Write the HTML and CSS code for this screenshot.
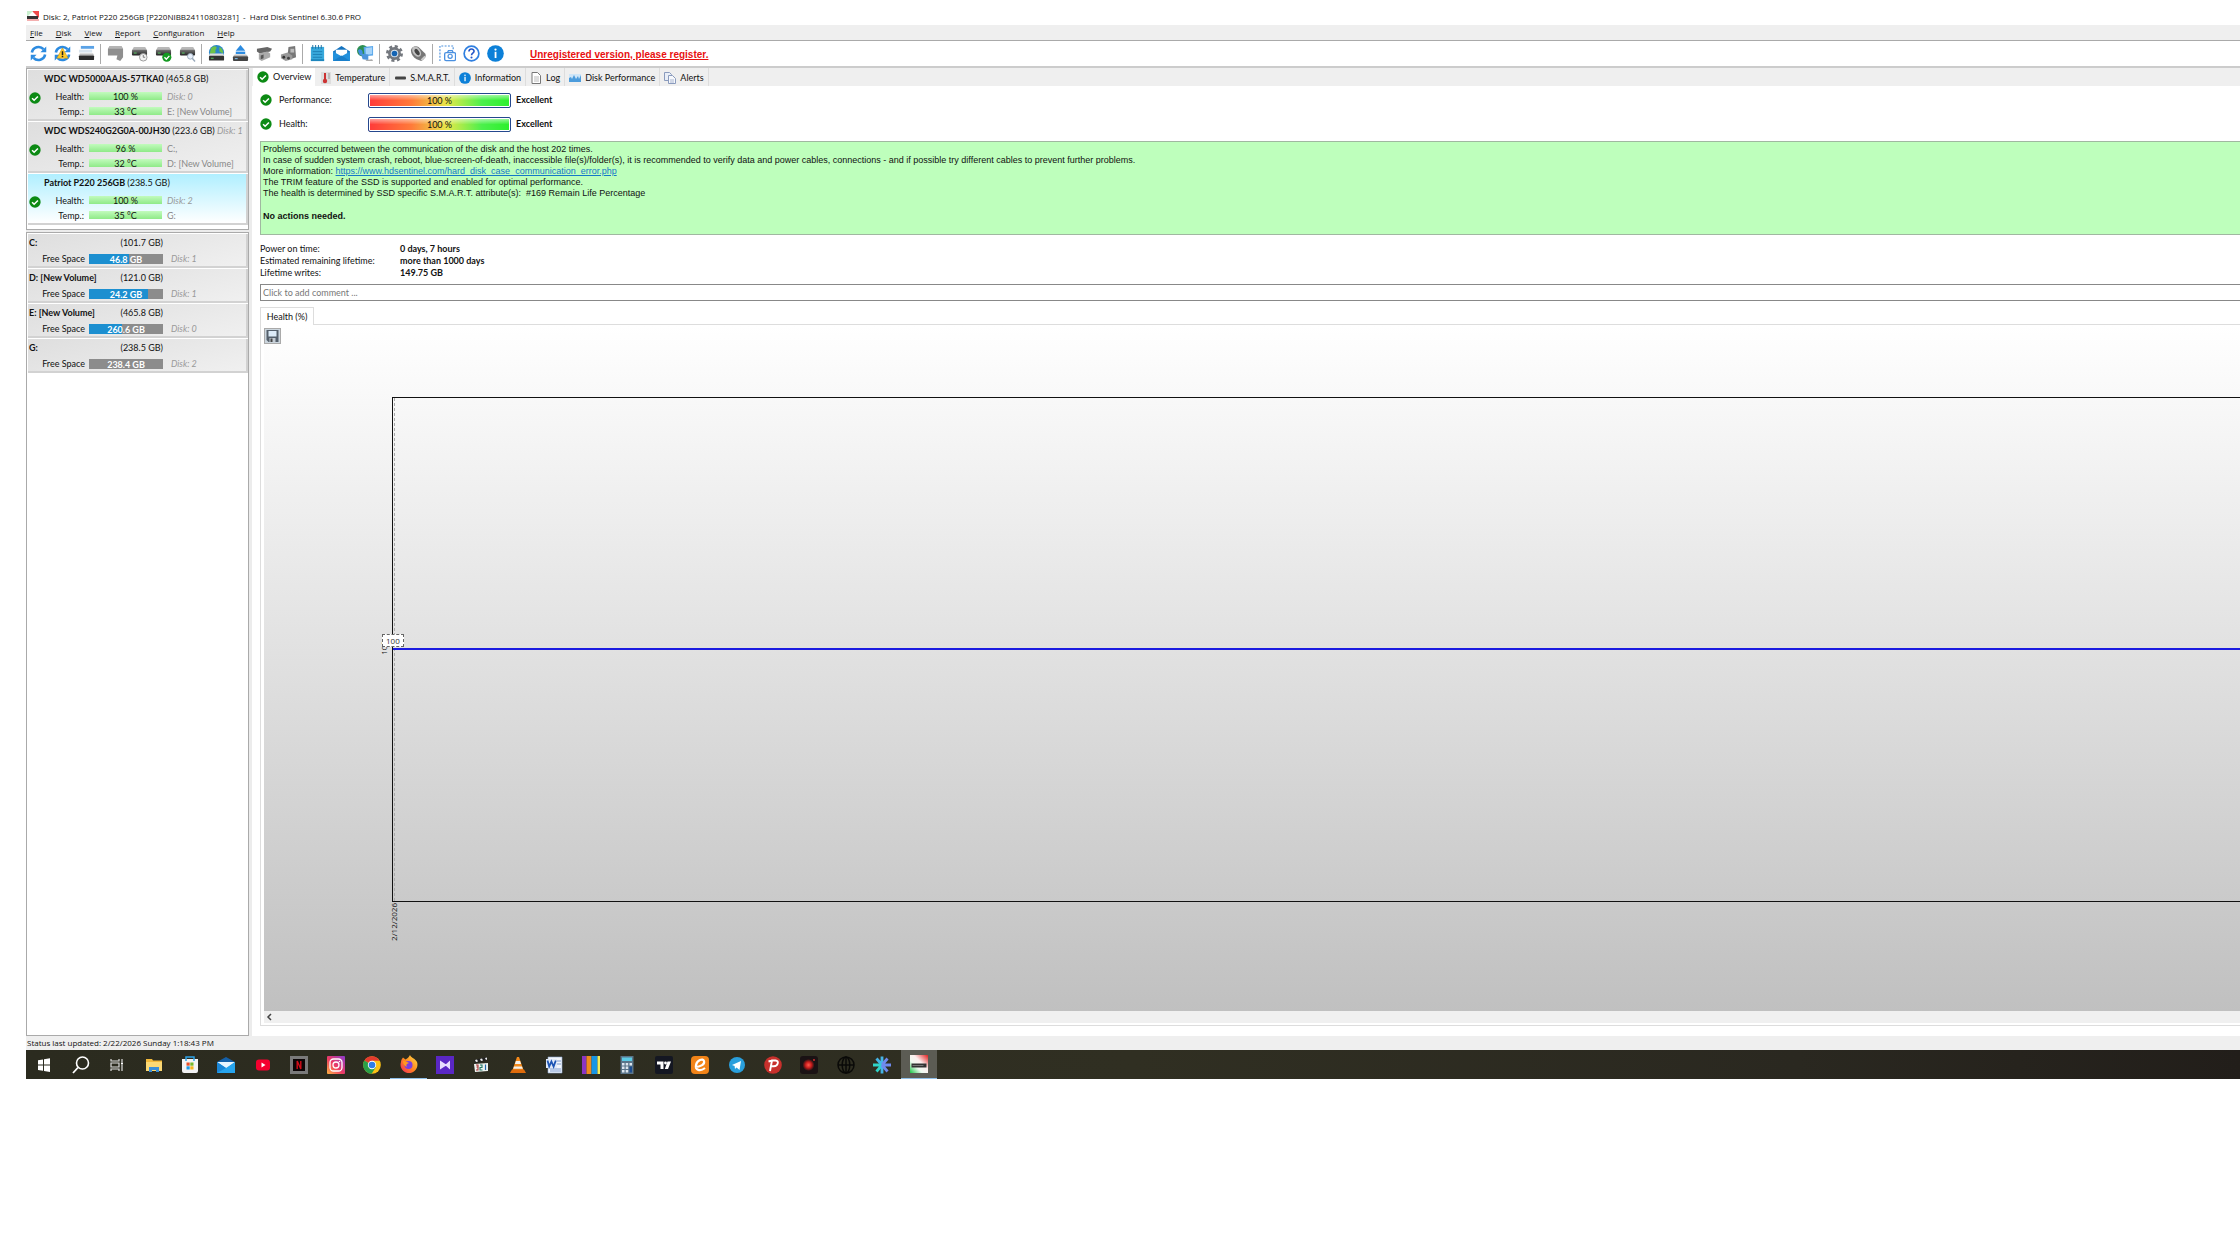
FILE: index.html
```
<!DOCTYPE html>
<html lang="en">
<head>
<meta charset="UTF-8" />
<meta name="viewport" content="width=device-width, initial-scale=1" />
<title>Hard Disk Sentinel</title>
<link rel="stylesheet" href="styles.css">
</head>
<body>

<!-- shared icons -->
<svg class="defs" width="0" height="0" aria-hidden="true">
  <linearGradient id="gradDrive" x1="0" y1="0" x2="0" y2="1"><stop offset="0" stop-color="#777"/><stop offset="1" stop-color="#222"/></linearGradient>
  <linearGradient id="gradInsta" x1="0" y1="1" x2="1" y2="0"><stop offset="0" stop-color="#fdb642"/><stop offset=".45" stop-color="#ee3b62"/><stop offset="1" stop-color="#8a3bd0"/></linearGradient>
  <linearGradient id="gradFox" x1="1" y1="0" x2="0" y2="1"><stop offset="0" stop-color="#ffe14a"/><stop offset=".5" stop-color="#ff8a1f"/><stop offset="1" stop-color="#f5245b"/></linearGradient>
  <radialGradient id="gradRed"><stop offset="0" stop-color="#ff5a4e"/><stop offset=".5" stop-color="#c81c1c"/><stop offset="1" stop-color="#1a1214"/></radialGradient>
  <linearGradient id="gradLogo" x1="0" y1="1" x2="1" y2="0"><stop offset="0" stop-color="#18c544"/><stop offset=".35" stop-color="#eefaf0"/><stop offset=".6" stop-color="#fdeeee"/><stop offset="1" stop-color="#e01f1f"/></linearGradient>
  <symbol id="ok" viewBox="0 0 14 14">
    <circle cx="7" cy="7" r="6.6" fill="#0c8a14"/>
    <path d="M3.6 7.2l2.4 2.4 4.4-4.4" fill="none" stroke="#fff" stroke-width="1.8"/>
  </symbol>
  <symbol id="info" viewBox="0 0 18 18">
    <circle cx="9" cy="9" r="8.8" fill="#0c80d8"/>
    <circle cx="9" cy="4.8" r="1.2" fill="#fff"/>
    <rect x="8.1" y="7.2" width="1.9" height="6.6" fill="#fff"/>
  </symbol>
  <symbol id="drive" viewBox="0 0 18 18">
    <path d="M3 2h12l2 3.5H1z" fill="#b9b9b9"/>
    <rect x="1" y="5" width="16" height="6" rx="1" fill="url(#gradDrive)"/>
    <rect x="3" y="8" width="3" height="1" fill="#5fd06a"/>
  </symbol>
  <symbol id="sync" viewBox="0 0 18 18">
    <path d="M2 8a7.2 7.2 0 0 1 12.3-3.6M16 10a7.2 7.2 0 0 1-12.3 3.6" fill="none" stroke="#2c8be0" stroke-width="2.8"/>
    <path d="M17.2 1.5v6.2h-6.2zM.8 16.5v-6.2h6.2z" fill="#2c8be0"/>
  </symbol>
  <symbol id="logo" viewBox="0 0 18 18">
    <rect width="18" height="18" fill="url(#gradLogo)"/>
    <rect x="1.5" y="8.5" width="15" height="4" fill="#333"/>
    <rect x="2.5" y="10" width="11" height="1" fill="#777"/>
  </symbol>
</svg>

<div class="app">
  <header class="titlebar">
    <svg class="icon-12" viewBox="0 0 12 12"><rect width="12" height="12" fill="#fff"/><path d="M5 0h7v7z" fill="#ef4b4b"/><path d="M0 0h6L0 6z" fill="#c9f0cf"/><rect y="5" width="11" height="3" fill="#333"/><path d="M0 8h12v2H0z" fill="#f4b0b0"/></svg>
    <span>Disk: 2, Patriot P220 256GB [P220NIBB24110803281] &nbsp;-&nbsp; Hard Disk Sentinel 6.30.6 PRO</span>
  </header>

  <nav class="menubar">
    <button><u>F</u>ile</button>
    <button><u>D</u>isk</button>
    <button><u>V</u>iew</button>
    <button><u>R</u>eport</button>
    <button><u>C</u>onfiguration</button>
    <button><u>H</u>elp</button>
  </nav>

  <div class="toolbar">
    <button aria-label="Refresh"><svg viewBox="0 0 18 18"><use href="#sync"/></svg></button>
    <button aria-label="Refresh alerts"><svg viewBox="0 0 18 18"><use href="#sync"/><path d="M9 3l6 11H3z" fill="#ffc928" stroke="#b98a10" stroke-width=".5"/><path d="M9 6.5v4M9 11.5v1.5" stroke="#222" stroke-width="1.6"/></svg></button>
    <button aria-label="Disk list"><svg viewBox="0 0 18 18"><rect x="3" y="1" width="14" height="3" fill="#5aa2e6"/><rect x="1" y="5" width="14" height="3" fill="#d9e4ee"/><path d="M2 9h14l1 2H1z" fill="#bbb"/><rect x="1" y="11" width="16" height="5" rx="1" fill="#2b2b2b"/></svg></button>
    <span class="sep"></span>
    <button aria-label="Surface test"><svg viewBox="0 0 18 18"><path d="M3 1h12l2 3v9l-3 4-4-2 1-4H1V4z" fill="#8f8f8f"/><path d="M3 1h12l2 3H1z" fill="#b4b4b4"/></svg></button>
    <button aria-label="Short self test"><svg viewBox="0 0 18 18"><use href="#drive"/><circle cx="13" cy="13" r="4" fill="#f3f3f3" stroke="#999"/><path d="M13 10.5V13h2" fill="none" stroke="#777"/></svg></button>
    <button aria-label="Extended self test"><svg viewBox="0 0 18 18"><use href="#drive"/><circle cx="12.5" cy="13" r="4.8" fill="#159a22"/><path d="M10 13l2 2 3.2-3.5" fill="none" stroke="#fff" stroke-width="1.5"/></svg></button>
    <button aria-label="Disk analysis"><svg viewBox="0 0 18 18"><use href="#drive"/><circle cx="12" cy="12" r="3" fill="#e6eefa" stroke="#9ab"/><path d="M14 14l3 3.5" stroke="#9ab" stroke-width="1.5"/></svg></button>
    <span class="sep"></span>
    <button aria-label="Online"><svg viewBox="0 0 18 18"><circle cx="9" cy="8" r="8" fill="#2a86c8"/><path d="M3 4c2-3 5-3 6-2s-2 3-1 5-4 3-6 2zM12 2c3 1 4 4 4 7l-4-2z" fill="#6cc24a"/><path d="M2 9h14l1 3H1z" fill="#ddd"/><rect x="1" y="11.5" width="16" height="5" rx="1" fill="#333"/><rect x="3" y="13.5" width="3" height="1" fill="#5fd06a"/></svg></button>
    <button aria-label="Eject"><svg viewBox="0 0 18 18"><path d="M9 0l5 6H4z" fill="#2c8be0"/><rect x="4" y="7" width="10" height="2.5" fill="#2c8be0"/><path d="M3 10h12l2 2H1z" fill="#bbb"/><rect x="1" y="12" width="16" height="5" rx="1" fill="#444"/><rect x="3" y="14" width="3" height="1" fill="#8cf"/></svg></button>
    <button aria-label="Connector"><svg viewBox="0 0 18 18"><path d="M1 4l11-2 5 2-2 3-11 2-3-2z" fill="#666"/><path d="M3 9l9-2 3 2v4l-9 4-3-2z" fill="#aaa"/><path d="M5 11l3-1v4l-3 1z" fill="#555"/></svg></button>
    <button aria-label="Power connector"><svg viewBox="0 0 18 18"><path d="M9 2l7-1 1 12-6 2-3-4z" fill="#777"/><path d="M11 4h4v4h-4z" fill="#bbb"/><path d="M1 10l7-2 5 3v4l-7 2-5-3z" fill="#999"/><circle cx="4" cy="13" r="1.5" fill="#333"/><circle cx="9" cy="14" r="1.5" fill="#444"/></svg></button>
    <span class="sep"></span>
    <button aria-label="Report"><svg viewBox="0 0 18 18"><rect x="2" y="2" width="14" height="15" fill="#38a9dc"/><path d="M4 0v4M7 0v4M10 0v4M13 0v4" stroke="#1c6fa0"/><path d="M4 7h10M4 10h10M4 13h10" stroke="#1d7fb4"/><rect x="2" y="15" width="14" height="2" fill="#1d86bd"/></svg></button>
    <button aria-label="Send mail"><svg viewBox="0 0 18 18"><path d="M0 7l9-6 9 6v10H0z" fill="#1473bf"/><path d="M3 5h12v7H3z" fill="#fff"/><path d="M0 7l9 5 9-5v10H0z" fill="#2391dc"/><path d="M0 17l9-6 9 6z" fill="#1a7fca"/></svg></button>
    <button aria-label="Network"><svg viewBox="0 0 18 18"><circle cx="6" cy="6" r="6" fill="#2d8f52"/><path d="M1 6c2-3 5-1 5 2s-2 3-3 3z" fill="#3f8ee0"/><path d="M7 2l10-1v10l-9 1z" fill="#5aa7ea"/><path d="M9 3.5l7-1v7l-6.500 1z" fill="#a6d4fa"/><path d="M4 9l8 1v6l-6-1z" fill="#4d95db"/><path d="M10 16l6-1 1 2h-8z" fill="#aaa"/></svg></button>
    <span class="sep"></span>
    <button aria-label="Settings"><svg viewBox="0 0 18 18"><circle cx="9" cy="9" r="7.5" fill="none" stroke="#74787e" stroke-width="3" stroke-dasharray="3.2 2.69"/><circle cx="9" cy="9" r="6.8" fill="#74787e"/><circle cx="9" cy="9" r="4" fill="#dde6ee"/><circle cx="9" cy="9" r="3" fill="#1464b4"/></svg></button>
    <button aria-label="Sound"><svg viewBox="0 0 18 18"><path d="M1 6C1 2 6 0 9 2l7 7c2 3-1 6-4 8l-5-2C3 13 1 9 1 6z" fill="#777"/><ellipse cx="7" cy="7" rx="4" ry="6" transform="rotate(-35 7 7)" fill="#c2c2c2"/><ellipse cx="7.5" cy="7.5" rx="2" ry="3.8" transform="rotate(-35 7.5 7.5)" fill="#444"/><path d="M12 16l4-4" stroke="#ccc" stroke-width="2"/></svg></button>
    <span class="sep"></span>
    <button aria-label="Screenshot"><svg viewBox="0 0 18 18"><path d="M1 17V1h14v4" fill="none" stroke="#4a8fdc" stroke-width="1.2" stroke-dasharray="2 1.5"/><rect x="6" y="8" width="11.5" height="8.5" rx="1.5" fill="#fff" stroke="#4a90e0" stroke-width="1.4"/><path d="M9 8l1-2h4l1 2" fill="none" stroke="#4a90e0" stroke-width="1.4"/><circle cx="11.8" cy="12" r="2.2" fill="none" stroke="#4a90e0" stroke-width="1.3"/></svg></button>
    <button aria-label="Help"><svg viewBox="0 0 18 18"><circle cx="9" cy="9" r="7.8" fill="#fff" stroke="#2f7fe0" stroke-width="1.8"/><path d="M6.3 7c0-3.6 5.4-3.6 5.4-.4 0 2-2.7 2-2.7 4.2" fill="none" stroke="#2456c8" stroke-width="1.7"/><circle cx="9" cy="13.3" r="1.1" fill="#2456c8"/></svg></button>
    <button aria-label="About"><svg viewBox="0 0 18 18"><use href="#info"/></svg></button>
    <a class="register" href="#">Unregistered version, please register.</a>
  </div>

  <div class="workspace">
    <aside class="sidebar">
      <ul class="panel disks">
        <li class="disk">
          <h4>WDC WD5000AAJS-57TKA0 <span>(465.8 GB)</span></h4>
          <svg class="icon-12 state"><use href="#ok"/></svg>
          <div class="reading"><span class="label">Health:</span><span class="meter">100 %</span><em>Disk: 0</em></div>
          <div class="reading"><span class="label">Temp.:</span><span class="meter">33 °C</span><span class="vol">E: [New Volume]</span></div>
        </li>
        <li class="disk">
          <h4>WDC WDS240G2G0A-00JH30 <span>(223.6 GB)</span> <em>Disk: 1</em></h4>
          <svg class="icon-12 state"><use href="#ok"/></svg>
          <div class="reading"><span class="label">Health:</span><span class="meter">96 %</span><span class="vol">C:,</span></div>
          <div class="reading"><span class="label">Temp.:</span><span class="meter">32 °C</span><span class="vol">D: [New Volume]</span></div>
        </li>
        <li class="disk selected">
          <h4>Patriot P220 256GB <span>(238.5 GB)</span></h4>
          <svg class="icon-12 state"><use href="#ok"/></svg>
          <div class="reading"><span class="label">Health:</span><span class="meter">100 %</span><em>Disk: 2</em></div>
          <div class="reading"><span class="label">Temp.:</span><span class="meter">35 °C</span><span class="vol">G:</span></div>
        </li>
      </ul>

      <ul class="panel volumes">
        <li class="volume">
          <div class="volume-name"><b>C:</b><span>(101.7 GB)</span></div>
          <div class="volume-space"><span class="label">Free Space</span><span class="space"><i style="width: 54%"></i><b>46.8 GB</b></span><em>Disk: 1</em></div>
        </li>
        <li class="volume">
          <div class="volume-name"><b>D: [New Volume]</b><span>(121.0 GB)</span></div>
          <div class="volume-space"><span class="label">Free Space</span><span class="space"><i style="width: 80%"></i><b>24.2 GB</b></span><em>Disk: 1</em></div>
        </li>
        <li class="volume">
          <div class="volume-name"><b>E: [New Volume]</b><span>(465.8 GB)</span></div>
          <div class="volume-space"><span class="label">Free Space</span><span class="space"><i style="width: 44%"></i><b>260.6 GB</b></span><em>Disk: 0</em></div>
        </li>
        <li class="volume">
          <div class="volume-name"><b>G:</b><span>(238.5 GB)</span></div>
          <div class="volume-space"><span class="label">Free Space</span><span class="space"><i style="width: 0%"></i><b>238.4 GB</b></span><em>Disk: 2</em></div>
        </li>
      </ul>
    </aside>

    <main class="main">
      <div class="tabs">
        <button class="tab active"><svg class="icon-12"><use href="#ok"/></svg>Overview</button>
        <button class="tab"><svg class="icon-12" viewBox="0 0 12 12"><rect x="2" width="10" height="12" fill="#ddd"/><path d="M6 1v7" stroke="#c33" stroke-width="2"/><circle cx="6" cy="9" r="2.2" fill="#c33"/><path d="M9 2h2M9 4h2M9 6h2" stroke="#999"/></svg>Temperature</button>
        <button class="tab"><svg class="icon-12" viewBox="0 0 12 12"><rect x="1" y="4.5" width="11" height="3" rx="1" fill="#444"/></svg>S.M.A.R.T.</button>
        <button class="tab"><svg class="icon-12"><use href="#info"/></svg>Information</button>
        <button class="tab"><svg class="icon-12" viewBox="0 0 12 12"><path d="M2 .5h5.5L10.5 3.5v8H2z" fill="#fff" stroke="#777"/><path d="M4 5h5M4 7h5M4 9h5" stroke="#aaa" stroke-width=".8"/></svg>Log</button>
        <button class="tab"><svg class="icon-12" viewBox="0 0 12 12"><rect y="2" width="12" height="8" fill="#cfe6f8"/><path d="M0 10V6l2-1 1 2 2-4 2 4 2-3 1 3 2-4v7z" fill="#4c9cdc"/></svg>Disk Performance</button>
        <button class="tab"><svg class="icon-12" viewBox="0 0 12 12"><path d="M.5.5h5l2 2v6h-7z" fill="#e9eef7" stroke="#8a9bbd"/><path d="M4.5 3.5h4l3 3v5h-7z" fill="#f6f8fc" stroke="#8a9bbd"/><path d="M6 8h4M6 10h4" stroke="#8a9bbd" stroke-width=".7"/></svg>Alerts</button>
      </div>

      <div class="overview">
        <div class="rating"><svg class="icon-12"><use href="#ok"/></svg><span class="rating-name">Performance:</span><span class="rating-bar">100 %</span><b>Excellent</b></div>
        <div class="rating"><svg class="icon-12"><use href="#ok"/></svg><span class="rating-name">Health:</span><span class="rating-bar">100 %</span><b>Excellent</b></div>

        <div class="message">
          <p>Problems occurred between the communication of the disk and the host 202 times.</p>
          <p>In case of sudden system crash, reboot, blue-screen-of-death, inaccessible file(s)/folder(s), it is recommended to verify data and power cables, connections - and if possible try different cables to prevent further problems.</p>
          <p>More information: <a href="#">https://www.hdsentinel.com/hard_disk_case_communication_error.php</a></p>
          <p>The TRIM feature of the SSD is supported and enabled for optimal performance.</p>
          <p>The health is determined by SSD specific S.M.A.R.T. attribute(s): &nbsp;#169 Remain Life Percentage</p>
          <p class="action">No actions needed.</p>
        </div>

        <dl class="stats">
          <dt>Power on time:</dt><dd>0 days, 7 hours</dd>
          <dt>Estimated remaining lifetime:</dt><dd>more than 1000 days</dd>
          <dt>Lifetime writes:</dt><dd>149.75 GB</dd>
        </dl>

        <input class="comment" type="text" aria-label="Comment" placeholder="Click to add comment ...">

        <button class="chart-tab">Health (%)</button>
        <div class="chart-panel">
          <div class="chart">
            <button class="save" aria-label="Save chart"><svg viewBox="0 0 12 12"><path d="M0 0h12v12H2L0 10z" fill="#55606c"/><rect x="2" y="1" width="8" height="5.5" fill="#dcebf8"/><rect x="3" y="8" width="6" height="4" fill="#c4ccd4"/><rect x="4" y="8.5" width="2" height="3.5" fill="#444"/></svg></button>
            <div class="plot">
              <div class="series"></div>
              <span class="axis-y">100</span>
              <span class="tip">100</span>
              <span class="axis-x">2/12/2026</span>
            </div>
          </div>
          <div class="scrollbar"><button aria-label="Scroll left"><svg viewBox="0 0 6 8"><path d="M5 1L2 4l3 3" fill="none" stroke="#444" stroke-width="1.5"/></svg></button></div>
        </div>
      </div>
    </main>
  </div>

  <footer class="statusbar">Status last updated: 2/22/2026 Sunday 1:18:43 PM</footer>

  <div class="taskbar">
    <div class="tasks">
      <button aria-label="Start"><svg viewBox="0 0 18 18"><path d="M3 4.2l5-.8v5.2H3zM9 3.2l6-1v6.4H9zM3 9.6h5v5.2l-5-.8zM9 9.6h6V16l-6-1z" fill="#fff"/></svg></button>
      <button aria-label="Search"><svg viewBox="0 0 18 18"><circle cx="10.5" cy="7" r="6" fill="none" stroke="#fff" stroke-width="1.6"/><path d="M6 11.5L1 17" stroke="#fff" stroke-width="1.8"/></svg></button>
      <button aria-label="Task view"><svg viewBox="0 0 18 18"><path d="M3 3v2h8V3M3 15v-2h8v2M3 7h8v4H3zM14 3v3M14 9v6" fill="none" stroke="#ddd" stroke-width="1.2"/><rect x="13" y="6.5" width="2" height="2" fill="#fff"/></svg></button>
      <button aria-label="Explorer"><svg viewBox="0 0 18 18"><path d="M1 3h6l1 1.5h9V15H1z" fill="#f2b93b"/><path d="M1 6h16v9H1z" fill="#fbd874"/><path d="M4 16v-5h10v5h-3v-2H7v2z" fill="#3a8ed8"/></svg></button>
      <button aria-label="Store"><svg viewBox="0 0 18 18"><path d="M5 5V1h8v4" fill="none" stroke="#2fa4e8" stroke-width="1.5"/><path d="M1 3h16v12q0 2-2 2H3q-2 0-2-2z" fill="#f4f4f4"/><path d="M5 5V3M13 5V3" stroke="#2fa4e8" stroke-width="1.5"/><rect x="5.5" y="6.5" width="3.2" height="3.2" fill="#e8502a"/><rect x="9.3" y="6.5" width="3.2" height="3.2" fill="#77b82a"/><rect x="5.5" y="10.3" width="3.2" height="3.2" fill="#1f9be6"/><rect x="9.3" y="10.3" width="3.2" height="3.2" fill="#f8b51e"/></svg></button>
      <button aria-label="Mail"><svg viewBox="0 0 18 18"><path d="M0 6l9-5 9 5v11H0z" fill="#1560a8"/><path d="M0 6h18l-9 7z" fill="#e8f5ff"/><path d="M0 6l9 6 9-6v11H0z" fill="#27a5ee"/><path d="M0 6l9 6-9 5z" fill="#1b86d6"/></svg></button>
      <button aria-label="YouTube"><svg viewBox="0 0 18 18"><rect x="2" y="3.5" width="14" height="11" rx="3" fill="#f4002f"/><path d="M7.5 6.5l4 2.5-4 2.5z" fill="#fff"/></svg></button>
      <button aria-label="Netflix"><svg viewBox="0 0 18 18"><rect width="18" height="18" fill="#7a7a7a"/><rect x="3" y="3" width="12" height="12" fill="#0c0506"/><path d="M7.2 13V5l3.600 8V5" fill="none" stroke="#d20d18" stroke-width="1.4"/></svg></button>
      <button aria-label="Instagram"><svg viewBox="0 0 18 18"><rect width="18" height="18" rx="1" fill="url(#gradInsta)"/><rect x="3" y="3" width="12" height="12" rx="3.5" fill="none" stroke="#fff" stroke-width="1.3"/><circle cx="9" cy="9" r="3" fill="none" stroke="#fff" stroke-width="1.3"/><circle cx="12.5" cy="5.5" r=".8" fill="#fff"/></svg></button>
      <button aria-label="Chrome"><svg viewBox="0 0 18 18"><circle cx="9" cy="9" r="8.8" fill="#fbc116"/><path d="M9 9L1.3 4.6A8.8 8.8 0 0 1 16.7 4.8H9z" fill="#e33b2e"/><path d="M9 9L1.3 4.6A8.8 8.8 0 0 0 8.6 17.8l4.2-6.6z" fill="#2a9f48"/><circle cx="9" cy="9" r="4.2" fill="#fff"/><circle cx="9" cy="9" r="3.3" fill="#2f7de8"/></svg></button>
      <button class="running" aria-label="Firefox"><svg viewBox="0 0 18 18"><path d="M3 2.5l2.5 2C8 3 9 2 10 0c1 3 5 3 7 7 2 6-3 11-8 11S-1 13 1 7c0-2 1-3 2-4.5z" fill="url(#gradFox)"/><circle cx="8.5" cy="10" r="4" fill="#7b3ee0"/><path d="M3 6c3 0 4 1 6 2-3 1-3 2-2 4-3-1-4-4-4-6z" fill="#ff9a1f"/></svg></button>
      <button aria-label="Media player"><svg viewBox="0 0 18 18"><rect width="18" height="18" fill="#5a27c4"/><path d="M4 4.500l7 4.500-7 4.500zM14 4.500v9L9 9z" fill="#e6dcff"/></svg></button>
      <button aria-label="Media Player Classic"><svg viewBox="0 0 18 18"><path d="M2 4l13-3v3L3 7z" fill="#222"/><path d="M3 4l2-.5 1 2-2 .5zM8 3l2-.5 1 2-2 .5zM13 2l2-.5v2l-1 .5z" fill="#eee"/><path d="M2 8l14-1v8l-13 1z" fill="#eef3f0"/><path d="M4 9h2v2H4.5h1.5v3H4" fill="none" stroke="#a33" stroke-width="1.1"/><path d="M8 9h2v2.5H8V14h2.5" fill="none" stroke="#276" stroke-width="1.1"/><path d="M13.5 8.5V14" stroke="#26a" stroke-width="1.2"/></svg></button>
      <button aria-label="VLC"><svg viewBox="0 0 18 18"><path d="M8 1h2l4.5 13h-11z" fill="#f58a1a"/><path d="M6.9 5h4.2l1 3H5.9zM5 10.5h8l.8 2.2H4.2z" fill="#f4f1ec"/><path d="M3 13.5h12l2 3.5H1z" fill="#e06c0c"/></svg></button>
      <button aria-label="Word"><svg viewBox="0 0 18 18"><path d="M3 1h14v16H3z" fill="#f3f6fb" stroke="#8fa8d0" stroke-width=".6"/><path d="M12 5h4M12 8h4M5 13h11M5 15h11" stroke="#7c9bd0"/><rect x="1" y="3" width="11" height="9" fill="#e1eaf8"/><path d="M2.5 4.5l1.7 6 2.2-5 2.2 5 2.2-6" fill="none" stroke="#1e55b4" stroke-width="1.8"/></svg></button>
      <button aria-label="Color bars"><svg viewBox="0 0 18 18"><path d="M0 0h4.5v18H0z" fill="#8a35c4"/><path d="M4.5 0h5v18h-5z" fill="#f08a1c"/><path d="M9.5 0h6v18h-6z" fill="#1896e4"/><path d="M15.5 0h2.5v18h-2.5z" fill="#f4ec5a"/></svg></button>
      <button aria-label="Calculator"><svg viewBox="0 0 18 18"><rect x="2.5" width="13" height="18" fill="#5a7488"/><rect x="4" y="1.5" width="10" height="3.5" fill="#5ccbe4"/><path d="M4 7h2.5v2.5H4zM7.7 7h2.5v2.5H7.7zM4 10.5h2.5V13H4zM7.7 10.5h2.5V13H7.7zM4 14h2.5v2.5H4zM7.7 14h2.5v2.5H7.7zM11.5 7H14v2.5h-2.5z" fill="#dde6ee"/><path d="M11.5 10.5H14v6h-2.5z" fill="#1c4c90"/></svg></button>
      <button aria-label="TradingView"><svg viewBox="0 0 18 18"><rect width="18" height="18" rx="2" fill="#141722"/><path d="M2 5.5h6.5V13H5.5V8.5H2zM12.5 5.5H16L13 13H9.8z" fill="#fff"/><circle cx="10.5" cy="7" r="1.4" fill="#fff"/></svg></button>
      <button aria-label="Browser"><svg viewBox="0 0 18 18"><rect width="18" height="18" rx="4" fill="#f28418"/><path d="M4 11c6 0 10-3 9-6s-7-1-8 4 4 7 9 3" fill="none" stroke="#fff" stroke-width="2.2"/></svg></button>
      <button aria-label="Telegram"><svg viewBox="0 0 18 18"><circle cx="9" cy="9" r="8" fill="#2a9fdc"/><path d="M4 9l9-4-1.5 9-3-2.5-1.5 1.5-.4-3z" fill="#fff"/></svg></button>
      <button aria-label="Psiphon"><svg viewBox="0 0 18 18"><circle cx="9" cy="9" r="8.8" fill="#c8302c"/><path d="M6 15L8 4.5h3.5q3 .3 2.2 3T10 10.2H7M4.5 5.5L8 4.5" fill="none" stroke="#fff" stroke-width="1.9"/></svg></button>
      <button aria-label="Recorder"><svg viewBox="0 0 18 18"><rect width="18" height="18" rx="3" fill="#1a1214"/><circle cx="8.5" cy="9" r="6" fill="url(#gradRed)"/><circle cx="14" cy="4" r=".9" fill="#d33"/></svg></button>
      <button aria-label="Web"><svg viewBox="0 0 18 18"><g fill="none" stroke="#0a0a08" stroke-width="1.5"><circle cx="9" cy="9" r="8"/><ellipse cx="9" cy="9" rx="3.8" ry="8"/><path d="M1 9h16M9 1v16"/></g></svg></button>
      <button aria-label="VPN"><svg viewBox="0 0 18 18"><g fill="none" stroke-width="2.8"><path d="M9 9V.5M9 9L3.5 2.5" stroke="#45b4e6"/><path d="M9 9H0M9 9l-5.500 6.500" stroke="#2fd3c8"/><path d="M9 9v8.500" stroke="#45b4e6"/><path d="M9 9l5.500-6.500M9 9h9M9 9l5.500 6.500" stroke="#6f8aee"/></g></svg></button>
      <button class="running current" aria-label="Hard Disk Sentinel"><svg viewBox="0 0 18 18"><use href="#logo"/></svg></button>
    </div>
  </div>
</div>

</body>
</html>
```

FILE: styles.css
```
* {
  box-sizing: border-box;
}
body {
  margin: 0;
  background: #fff;
  color: #111;
  font: 9px/12px Lato, "Open Sans", sans-serif;
  overflow-x: hidden;
}
button {
  padding: 0;
  border: none;
  background: none;
  color: inherit;
  font: inherit;
}
ul, dl, dd, p, h4 {
  margin: 0;
  padding: 0;
}
ul {
  list-style: none;
}
.defs {
  position: absolute;
}
.app {
  padding: 9px 0 0 26px;
}
.icon-12 {
  flex: none;
  width: 12px;
  height: 12px;
}

/* --- Title, menu, toolbar --- */
.titlebar,
.menubar,
.statusbar,
.plot {
  font-family: "Open Sans", sans-serif;
  font-size: 8px;
}
.titlebar {
  display: flex;
  align-items: center;
  gap: 4px;
  height: 16px;
  padding-left: 1px;
}
.menubar {
  display: flex;
  align-items: center;
  gap: 13px;
  height: 15px;
  padding-left: 4px;
  background: #efefef;
}
.toolbar {
  display: flex;
  align-items: center;
  height: 28px;
  border-top: 1px solid #aaa;
  border-bottom: 2px solid #ccc;
}
.toolbar button {
  display: flex;
  justify-content: center;
  width: 24px;
}
.toolbar svg {
  width: 17px;
  height: 17px;
}
.sep {
  width: 1px;
  height: 20px;
  margin: 0 2px;
  background: #aaa;
}
.register {
  margin-left: 23px;
  padding-top: 2px;
  color: #e81010;
  font: bold 10px/12px "Liberation Sans", sans-serif;
}

/* --- Left column --- */
.workspace {
  display: flex;
  height: 968px;
}
.sidebar {
  display: flex;
  flex: none;
  flex-direction: column;
  gap: 2px;
  width: 226px;
  border-right: 3px solid #ececec;
  background: #ececec;
}
.panel {
  border: 1px solid #aaa;
  background: #fff;
}
.disks {
  height: 162px;
  padding: 1px 0 0 1px;
}
.volumes {
  flex: 1;
  padding: 1px 0 0 1px;
}
.disk,
.volume {
  border: solid #d2d2d2;
  border-width: 0 2px 2px 0;
  background: linear-gradient(165deg, #dedede, #f0f0f0);
}
.disk {
  display: grid;
  grid-template: 18px 15px 15px / 16px 1fr;
  margin-bottom: 1px;
  height: 51px;
}
.disk h4 {
  grid-column: 2;
  font-size: 9px;
  line-height: 18px;
  white-space: nowrap;
}
.disk h4 span,
.disk h4 em {
  font-weight: normal;
}
em {
  color: #999;
}
.vol {
  color: #888;
}
.state {
  grid-row: 2 / 4;
  margin: 4px 0 0 1px;
}
.reading {
  display: grid;
  grid-column: 2;
  grid-template-columns: 40px 73px 1fr;
  column-gap: 5px;
  align-items: center;
  line-height: 14px;
}
.reading .label,
.volume-space .label {
  text-align: right;
}
.reading .label,
.reading em,
.vol {
  padding-top: 2px;
}
.meter {
  height: 8px;
  background: linear-gradient(#c2fbbd, #8fea88);
  line-height: 10px;
  text-align: center;
}
.selected {
  background: linear-gradient(#b0efff, #fff);
}
.volume {
  height: 34px;
  margin-bottom: 1px;
  padding-left: 1px;
}
.volume-name {
  display: flex;
  justify-content: space-between;
  width: 134px;
  line-height: 17px;
}
.volume-space {
  display: grid;
  grid-template-columns: 56px 74px 1fr;
  column-gap: 4px;
  align-items: center;
  height: 15px;
}
.volume-space em {
  margin-left: 4px;
}
.space {
  position: relative;
  height: 10px;
  background: #8c8c8c;
  color: #fff;
  line-height: 11px;
  text-align: center;
}
.space i {
  position: absolute;
  top: 0;
  left: 0;
  height: 10px;
  background: #1c8fd0;
}
.space b {
  position: relative;
}

/* --- Right column --- */
.main {
  flex: 1;
  min-width: 0;
}
.tabs {
  display: flex;
  height: 18px;
  padding-left: 1px;
  background: #efefef;
}
.tab {
  display: flex;
  align-items: center;
  gap: 4px;
  padding: 1px 4px 0;
  border-right: 1px solid #ddd;
}
.tab.active {
  padding-top: 0;
  border: none;
  background: #fff;
}
.overview {
  padding: 2px 0 0 8px;
}
.rating {
  display: flex;
  align-items: center;
  height: 24px;
}
.rating-name {
  width: 89px;
  margin-left: 7px;
}
.rating-bar {
  width: 143px;
  height: 15px;
  margin-right: 5px;
  border: 1px solid #25488e;
  border-radius: 2px;
  background: linear-gradient(rgba(255,255,255,.6), rgba(255,255,255,0) 50%), linear-gradient(90deg, #ff3a3a, #ff7a3a 30%, #e8e84a 55%, #4cf04c 80%, #2cf02c);
  box-shadow: inset 0 0 0 1px #fff;
  line-height: 13px;
  text-align: center;
}
.message {
  height: 94px;
  margin-top: 5px;
  padding: 2px 0 0 2px;
  border: solid #a0b8a0;
  border-width: 1px 0 1px 1px;
  background: #beffbc;
  font: 9px/11px "Liberation Sans", sans-serif;
}
.message a {
  color: #1478c8;
}
.message .action {
  margin-top: 12px;
  font-weight: bold;
}
.stats {
  display: grid;
  grid-template-columns: 140px 1fr;
  margin: 8px 0 5px;
}
.stats dd {
  font-weight: bold;
}
.comment {
  display: block;
  width: 100%;
  height: 17px;
  margin-bottom: 6px;
  padding: 0 2px;
  border: solid #888;
  border-width: 1px 0 1px 1px;
  font: inherit;
}
.comment::placeholder {
  color: #777;
}
.chart-tab {
  position: relative;
  display: block;
  width: 54px;
  height: 18px;
  margin-bottom: -1px;
  border: 1px solid #ddd;
  border-bottom: none;
  background: #fff;
}
.chart-panel {
  padding: 1px 0 2px 3px;
  border: solid #ddd;
  border-width: 1px 0 1px 1px;
}
.chart {
  height: 685px;
  padding: 2px 0 0;
  background: linear-gradient(#fff, #c0c0c0);
}
.save {
  display: block;
  padding: 1px;
  border: 1px solid #aaa;
  background: #ccd6de;
}
.save svg {
  display: block;
  width: 13px;
  height: 12px;
}
.plot {
  position: relative;
  height: 505px;
  margin: 53px 0 0 128px;
  border: solid #111;
  border-width: 1px 0 1px 1px;
}
.plot::before {
  content: "";
  position: absolute;
  height: 100%;
  border-left: 1px dashed #aaa;
  margin-left: 1px;
}
.series {
  position: absolute;
  top: 250px;
  width: 100%;
  height: 2px;
  background: #1c1ce0;
}
.axis-y,
.axis-x {
  position: absolute;
  line-height: 10px;
  writing-mode: vertical-rl;
  transform: rotate(180deg);
}
.axis-y {
  top: 243px;
  left: -14px;
}
.axis-x {
  top: 505px;
  left: -4px;
}
.tip {
  position: absolute;
  top: 236px;
  left: -11px;
  padding: 0 3px;
  border: 1px dashed #666;
  background: #fff;
  color: #333;
  line-height: 11px;
}
.scrollbar {
  height: 12px;
  background: #f0f0f0;
}
.scrollbar button {
  display: block;
  padding: 2px;
}
.scrollbar svg {
  display: block;
  width: 6px;
  height: 8px;
}

/* --- Bottom bars --- */
.statusbar {
  height: 14px;
  padding-left: 1px;
  background: #efefef;
  line-height: 14px;
}
.taskbar {
  height: 29px;
  background: linear-gradient(90deg, #2b2b1f, #302f22 50%, #2a2820 80%, #221e1a);
}
.tasks {
  display: grid;
  grid-template-columns: repeat(25, 1fr);
  width: 911px;
  height: 29px;
}
.tasks button {
  display: flex;
  align-items: center;
  justify-content: center;
}
.tasks svg {
  width: 18px;
  height: 18px;
}
.tasks .running {
  border-bottom: 1px solid #8fbfe8;
}
.tasks .current {
  background: #5c5c54;
}
```
